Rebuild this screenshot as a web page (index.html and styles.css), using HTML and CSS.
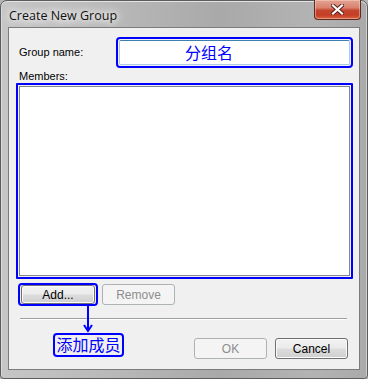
FILE: index.html
```html
<!DOCTYPE html>
<html lang="en">
<head>
  <meta charset="UTF-8">
  <title>Create New Group</title>
  <link rel="stylesheet" href="styles.css">
</head>
<body>
  <div class="window">
    <div class="titlebar">
      <span class="title">Create New Group</span>
      <button class="close-btn" aria-label="Close">
        <svg width="13" height="11" viewBox="0 0 13 11">
          <path d="M2 1.5 L11 9.5 M11 1.5 L2 9.5" stroke="#5a1d14" stroke-width="4" stroke-linecap="square"/>
          <path d="M2 1.5 L11 9.5 M11 1.5 L2 9.5" stroke="#fff" stroke-width="2.2" stroke-linecap="square"/>
        </svg>
      </button>
    </div>

    <div class="client">
      <div class="name-row">
        <label class="label name-label">Group name:</label>
        <div class="mark name-mark">
          <div class="textbox">分组名</div>
        </div>
      </div>

      <div class="label members-label">Members:</div>
      <div class="mark list-mark">
        <div class="listbox"></div>
      </div>

      <div class="member-buttons">
        <div class="mark add-mark">
          <button class="btn add-btn">Add...</button>
        </div>
        <button class="btn remove-btn" disabled>Remove</button>
      </div>

      <div class="separator"></div>

      <div class="footer">
        <button class="btn" disabled>OK</button>
        <button class="btn">Cancel</button>
      </div>

      <!-- annotation over the dialog -->
      <svg class="note-arrow" width="12" height="28" viewBox="0 0 12 28">
        <path d="M6 0 V26 M2 20 L6 26 L10 20" fill="none" stroke="#0000ff" stroke-width="2"/>
      </svg>
      <div class="note">添加成员</div>
    </div>
  </div>
</body>
</html>
```

FILE: styles.css
```css
* {
  box-sizing: border-box;
  margin: 0;
  padding: 0;
}
body {
  width: 368px;
  height: 379px;
  background: #b4b4b4;
  font-family: "Liberation Sans", Arial, sans-serif;
  font-size: 11px;
  color: #000;
}
.window {
  width: 368px;
  height: 379px;
  display: flex;
  flex-direction: column;
  padding: 0 7px 8px 7px;
  border: 1px solid #5c5c5c;
  border-radius: 7px 7px 4px 4px;
  background: linear-gradient(90deg, #c6c6c6 0%, #b6b6b6 35%, #a9a9a9 60%, #b3b3b3 85%, #aaaaaa 100%);
  box-shadow: inset 0 1px 0 #e4e4e4, inset 1px 0 0 #dadada, inset -1px 0 0 #d0d0d0;
}
/* Title bar */
.titlebar {
  height: 26px;
  display: flex;
  align-items: flex-start;
  justify-content: space-between;
}
.title {
  margin-top: 7px;
  padding-left: 1px;
  font-family: "Open Sans", sans-serif;
  font-size: 12.5px;
  line-height: 16px;
  color: #111;
  text-shadow: 0 0 6px #fff, 0 0 10px #fff, 0 0 14px #f4f4f4;
}
.close-btn {
  width: 47px;
  height: 20px;
  margin-top: -1px;
  margin-right: -1px;
  border: 1px solid #5e2a22;
  border-top: none;
  border-radius: 0 0 4px 4px;
  background: linear-gradient(180deg, #e3a394 0%, #d9826d 40%, #c4452e 55%, #c53f26 80%, #d8653f 100%);
  box-shadow: inset 0 0 0 1px rgba(255, 220, 200, 0.45);
  display: flex;
  align-items: center;
  justify-content: center;
}
/* Client area */
.client {
  flex: 1;
  position: relative;
  background: #f0f0f0;
  border: 1px solid #7c7c7c;
}
.label {
  line-height: 13px;
}
.name-row {
  display: flex;
  align-items: center;
  margin-top: 9px;
}
.name-label {
  width: 107px;
  padding-left: 10px;
}
.mark {
  border: 2px solid #0000ff;
  border-radius: 4px;
  padding: 1px;
}
.name-mark {
  width: 237px;
  height: 31px;
}
.textbox {
  height: 100%;
  background: #fff;
  border: 1px solid #abcbe4;
  border-top-color: #3c7fb1;
  border-radius: 2px;
  padding-left: 65px;
  font-family: "Noto Sans CJK SC", sans-serif;
  font-size: 16px;
  line-height: 22px;
  color: #0000ff;
}
.members-label {
  margin-top: 2px;
  padding-left: 10px;
}
.list-mark {
  width: 337px;
  height: 196px;
  margin-left: 7px;
  border-radius: 1px;
}
.listbox {
  height: 100%;
  background: #fff;
  border: 1px solid #828790;
}
/* Buttons */
.btn {
  width: 73px;
  height: 21px;
  font-family: "Liberation Sans", Arial, sans-serif;
  font-size: 12px;
  color: #000;
  border: 1px solid #707070;
  border-radius: 3px;
  background: linear-gradient(180deg, #f2f2f2 0%, #ebebeb 48%, #dddddd 52%, #cfcfcf 100%);
  box-shadow: inset 0 0 0 1px #fbfbfb;
}
.btn:disabled {
  color: #8d8d8d;
  border-color: #adb2b5;
  background: #f4f4f4;
  box-shadow: none;
}
.member-buttons {
  display: flex;
  align-items: center;
  gap: 4px;
  margin-top: 4px;
  padding-left: 9px;
}
.add-mark {
  width: 80px;
  height: 23px;
  padding: 0 1px;
}
.add-btn {
  width: 100%;
  height: 19px;
}
.separator {
  width: 327px;
  margin: 12px 0 0 11px;
  border-top: 1px solid #a0a0a0;
  border-bottom: 1px solid #ffffff;
}
.footer {
  display: flex;
  justify-content: flex-end;
  gap: 8px;
  margin-top: 18px;
  padding-right: 11px;
}
/* Annotation */
.note-arrow {
  position: absolute;
  left: 73px;
  top: 277px;
}
.note {
  position: absolute;
  left: 44px;
  top: 305px;
  width: 71px;
  height: 24px;
  border: 2px solid #0000ff;
  border-radius: 4px;
  background: #f0f0f0;
  font-family: "Noto Sans CJK SC", sans-serif;
  font-size: 16px;
  line-height: 19px;
  color: #0000ff;
  text-align: center;
}
```
